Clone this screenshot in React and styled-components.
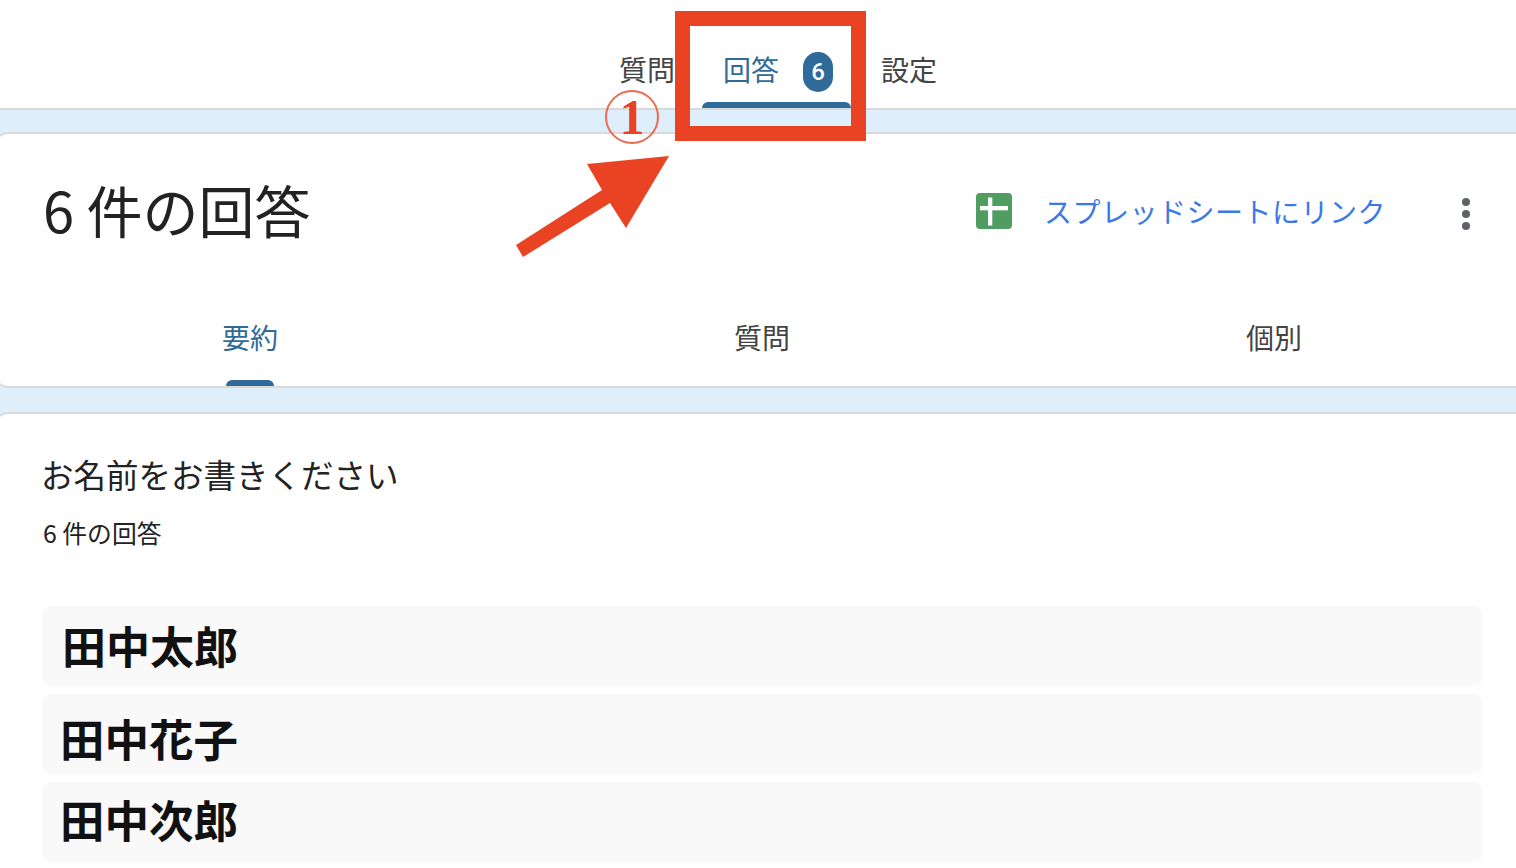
import React from "react"
import styled, { createGlobalStyle } from "styled-components"

const JP = `"Noto Sans CJK JP", "Noto Sans", sans-serif`
const BLUE = "#2f6a99"
const RED = "#e94324"

const GlobalStyle = createGlobalStyle`
    html, body {
        margin: 0;
        padding: 0;
        background: #deeffb;
    }
    body {
        font-family: ${JP};
        color: #333;
        overflow: hidden;
    }
`

const Page = styled.div`
    position: relative;
    width: 1516px;
    height: 868px;
    overflow: hidden;
`

const TopBar = styled.div`
    display: flex;
    justify-content: center;
    height: 108px;
    padding-left: 40px;
    background: #fff;
    border-bottom: 2px solid #d9d9d9;
    box-sizing: content-box;
`

const TopTab = styled.div`
    position: relative;
    display: flex;
    align-items: center;
    gap: 24px;
    height: 108px;
    box-sizing: border-box;
    padding: 36px ${(p) => p.$right || 0}px 6px ${(p) => p.$left || 0}px;
    margin-right: ${(p) => p.$gap || 0}px;
    font-size: 28px;
    line-height: 40px;
    color: ${(p) => (p.$active ? BLUE : "#444")};

    &::after {
        content: "";
        display: ${(p) => (p.$active ? "block" : "none")};
        position: absolute;
        left: 0;
        right: 0;
        bottom: 0;
        height: 6px;
        background: ${BLUE};
        border-radius: 6px 6px 0 0;
    }
`

const Badge = styled.span`
    display: flex;
    align-items: center;
    justify-content: center;
    width: 30px;
    height: 40px;
    margin-top: 6px;
    border-radius: 15px;
    background: ${BLUE};
    color: #fff;
    font-family: Roboto, sans-serif;
    font-weight: 500;
    font-size: 24px;
`

const Card = styled.section`
    width: 1536px;
    margin-left: -6px;
    background: #fff;
    border: 2px solid #d9d9d9;
    border-radius: 14px;
    box-sizing: border-box;
    margin-top: ${(p) => p.$top}px;
`

const SummaryCard = styled(Card)`
    height: 256px;
    display: flex;
    flex-direction: column;
`

const TitleRow = styled.div`
    display: flex;
    align-items: center;
    height: 156px;
    padding: 0 56px 0 47px;
`

const Title = styled.h1`
    flex: 1;
    margin: -6px 0 0;
    font-family: ${JP};
    font-size: 56px;
    font-weight: 400;
    line-height: 80px;
    color: #222;
`

const SheetIcon = styled.svg`
    width: 36px;
    height: 36px;
    margin: -2px 32px 0 0;
`

const SheetLink = styled.a`
    margin: -2px 74px 0 0;
    font-size: 28px;
    letter-spacing: 0.5px;
    font-weight: 400;
    color: #3b78e7;
`

const MoreIcon = styled.svg`
    width: 12px;
    height: 36px;
    margin-top: 4px;
`

const SubTabs = styled.div`
    display: grid;
    grid-template-columns: repeat(3, 512px);
    flex: 1;
    margin-left: -2px;
`

const SubTab = styled.div`
    position: relative;
    display: flex;
    justify-content: center;
    padding-top: 27px;
    font-size: 28px;
    line-height: 40px;
    color: ${(p) => (p.$active ? BLUE : "#444")};
`

const SubIndicator = styled.span`
    position: absolute;
    left: 232px;
    bottom: 0;
    width: 48px;
    height: 6px;
    background: ${BLUE};
    border-radius: 6px 6px 0 0;
`

const ResponsesCard = styled(Card)`
    height: 480px;
    padding: 37px 0 0 47px;
`

const Question = styled.div`
    margin-left: -2px;
    font-size: 32.500px;
    font-weight: 400;
    line-height: 46px;
    color: #222;
`

const Count = styled.div`
    margin-top: 17px;
    font-size: 24.800px;
    font-weight: 400;
    line-height: 36px;
    color: #222;
`

const AnswerList = styled.div`
    display: flex;
    flex-direction: column;
    gap: 8px;
    width: 1440px;
    margin: 56px 0 0 -1px;
`

const Answer = styled.div`
    height: 80px;
    box-sizing: border-box;
    padding: ${(p) => p.$top}px 0 0 ${(p) => p.$left}px;
    background: #f9f9f9;
    border-radius: 8px;
    font-size: ${(p) => p.$size}px;
    font-weight: 700;
    line-height: 64px;
    color: #111;
`

const Highlight = styled.div`
    position: absolute;
    left: 675px;
    top: 11px;
    width: 191px;
    height: 130px;
    box-sizing: border-box;
    border: 15px solid ${RED};
`

const Arrow = styled.svg`
    position: absolute;
    left: 510px;
    top: 150px;
    width: 165px;
    height: 112px;
`

const StepMark = styled.div`
    position: absolute;
    left: 605px;
    top: 90px;
    width: 54px;
    height: 54px;
    box-sizing: border-box;
    display: flex;
    align-items: center;
    justify-content: center;
    border: 2px solid #ec6a50;
    border-radius: 50%;
    color: ${RED};
    font-family: "Liberation Serif", serif;
    font-weight: 700;
    font-size: 50px;
    line-height: 1;
`

const App = () => {
    return (
        <Page>
            <GlobalStyle />
            <TopBar>
                <TopTab $gap={27}>質問</TopTab>
                <TopTab $active $left={21} $right={18} $gap={30}>
                    回答
                    <Badge>6</Badge>
                </TopTab>
                <TopTab>設定</TopTab>
            </TopBar>

            <SummaryCard $top={22}>
                <TitleRow>
                    <Title>6 件の回答</Title>
                    <SheetIcon viewBox="0 0 36 36">
                        <rect width="36" height="36" rx="4" fill="#4f9d60" />
                        <rect x="4" y="13" width="28" height="4.300" fill="#fff" />
                        <rect x="12" y="4.500" width="4.300" height="28" fill="#fff" />
                    </SheetIcon>
                    <SheetLink>スプレッドシートにリンク</SheetLink>
                    <MoreIcon viewBox="0 0 12 36">
                        <circle cx="6" cy="6" r="4" fill="#5f6368" />
                        <circle cx="6" cy="18" r="4" fill="#5f6368" />
                        <circle cx="6" cy="30" r="4" fill="#5f6368" />
                    </MoreIcon>
                </TitleRow>
                <SubTabs>
                    <SubTab $active>
                        要約
                        <SubIndicator />
                    </SubTab>
                    <SubTab>質問</SubTab>
                    <SubTab>個別</SubTab>
                </SubTabs>
            </SummaryCard>

            <ResponsesCard $top={24}>
                <Question>お名前をお書きください</Question>
                <Count>6 件の回答</Count>
                <AnswerList>
                    <Answer $top={7} $left={20} $size={44}>田中太郎</Answer>
                    <Answer $top={12} $left={18} $size={44.500}>田中花子</Answer>
                    <Answer $top={5} $left={18} $size={44.500}>田中次郎</Answer>
                </AnswerList>
            </ResponsesCard>

            <StepMark>1</StepMark>
            <Highlight />
            <Arrow viewBox="510 150 165 112">
                <polygon
                    points="669,156 587,164 602,190 516,245 523,257 610,203 626,228"
                    fill={RED}
                />
            </Arrow>
        </Page>
    )
}

export default App
